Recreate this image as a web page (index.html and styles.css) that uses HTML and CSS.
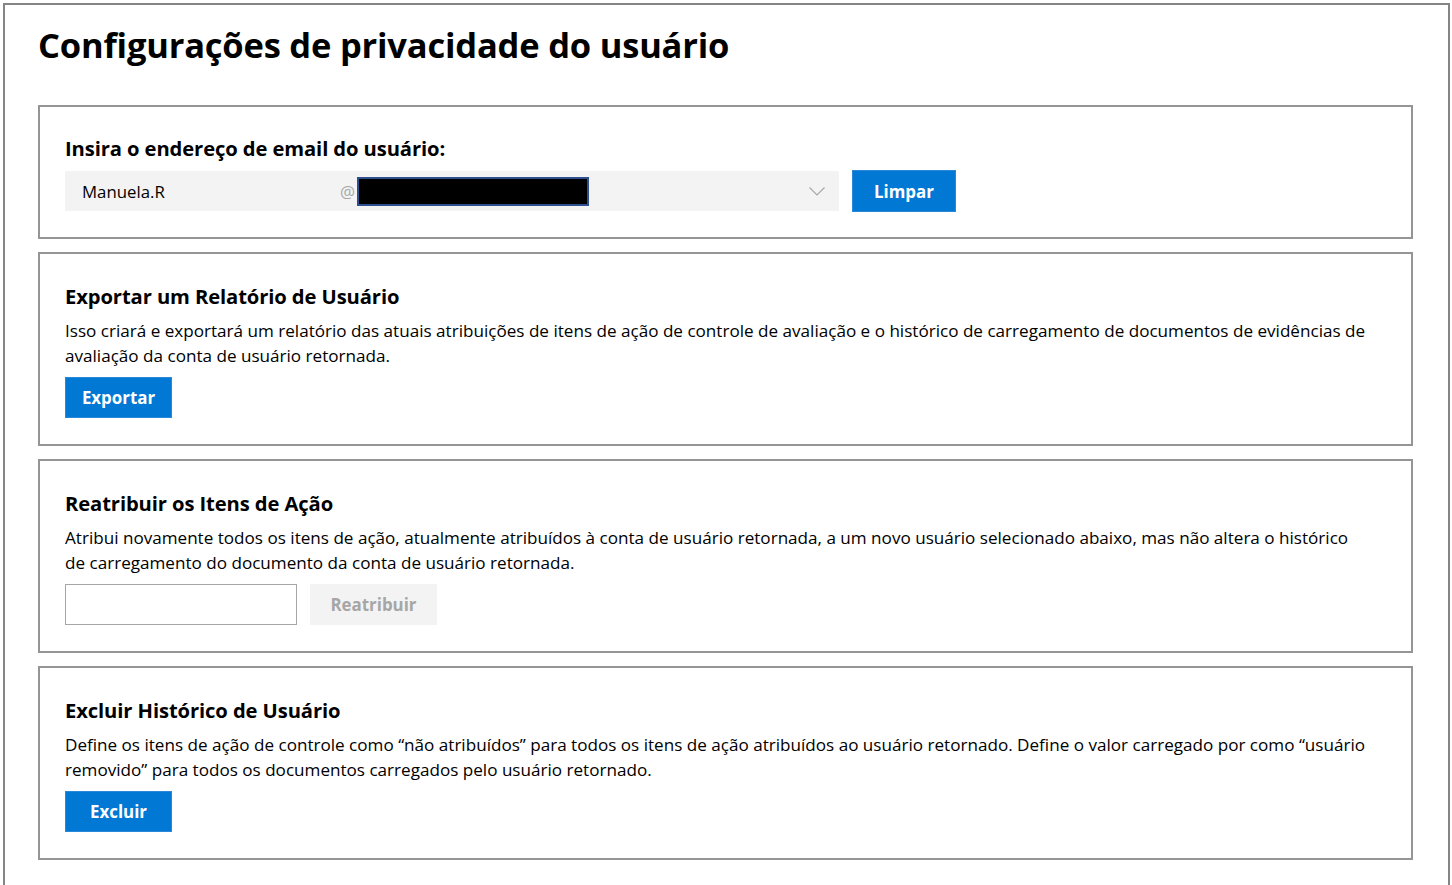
FILE: index.html
```html
<!DOCTYPE html>
<html lang="pt-BR">
<head>
<meta charset="utf-8">
<title>Configurações de privacidade do usuário</title>
<link rel="stylesheet" href="styles.css">
</head>
<body>
<div class="frame">
  <h1 class="title">Configurações de privacidade do usuário</h1>

  <section class="card card-email">
    <h2 class="card-title">Insira o endereço de email do usuário:</h2>
    <div class="email-row">
      <div class="email-field">
        <span class="email-user">Manuela.R</span>
        <span class="email-at">@</span>
        <span class="email-domain"></span>
        <svg class="chevron" width="16" height="9" viewBox="0 0 16 9"><path d="M0.5 0.5 L8 8 L15.5 0.5" fill="none" stroke="#a8a8a8" stroke-width="1.2"/></svg>
      </div>
      <button class="btn btn-primary btn-limpar">Limpar</button>
    </div>
  </section>

  <section class="card">
    <h2 class="card-title">Exportar um Relatório de Usuário</h2>
    <p class="card-text">Isso criará e exportará um relatório das atuais atribuições de itens de ação de controle de avaliação e o histórico de carregamento de documentos de evidências de avaliação da conta de usuário retornada.</p>
    <button class="btn btn-primary btn-wide">Exportar</button>
  </section>

  <section class="card">
    <h2 class="card-title">Reatribuir os Itens de Ação</h2>
    <p class="card-text">Atribui novamente todos os itens de ação, atualmente atribuídos à conta de usuário retornada, a um novo usuário selecionado abaixo, mas não altera o histórico de carregamento do documento da conta de usuário retornada.</p>
    <div class="reassign-row">
      <input class="text-input" type="text">
      <button class="btn btn-disabled" disabled>Reatribuir</button>
    </div>
  </section>

  <section class="card">
    <h2 class="card-title">Excluir Histórico de Usuário</h2>
    <p class="card-text">Define os itens de ação de controle como “não atribuídos” para todos os itens de ação atribuídos ao usuário retornado. Define o valor carregado por como “usuário removido” para todos os documentos carregados pelo usuário retornado.</p>
    <button class="btn btn-primary btn-wide">Excluir</button>
  </section>
</div>
</body>
</html>
```

FILE: styles.css
```css
* { box-sizing: border-box; }

html, body {
  margin: 0;
  padding: 0;
  background: #ffffff;
  overflow: hidden;
}

body {
  font-family: "Open Sans", "Noto Sans", sans-serif;
  color: #000;
}

.frame {
  margin: 3px 2px 0 3px;
  border: 2px solid #858585;
  border-bottom: none;
  min-height: 900px;
  padding: 19px 35px 0 33px;
}

.title {
  margin: 0 0 39px 0;
  font-size: 34.5px;
  line-height: 42px;
  font-weight: 700;
  letter-spacing: -0.2px;
}

.card {
  border: 2px solid #959595;
  padding: 28px 44px 26px 25px;
  margin-bottom: 13px;
}

.card-email {
  padding-top: 27px;
  padding-bottom: 25px;
}

.card-title {
  margin: 0 0 8px 0;
  font-size: 20.2px;
  line-height: 28px;
  font-weight: 700;
  letter-spacing: -0.1px;
}

.card-text {
  margin: 0 0 9px 0;
  font-size: 17.1px;
  line-height: 25px;
  font-weight: 400;
}

.email-row {
  display: flex;
  align-items: center;
  gap: 13px;
}

.email-field {
  width: 774px;
  height: 40px;
  background: #f3f3f3;
  display: flex;
  align-items: center;
  padding: 0 14px 0 17px;
  font-size: 16.8px;
}

.email-user {
  width: 258px;
}

.email-at {
  color: #a8a8a8;
  width: 17px;
}

.email-domain {
  width: 232px;
  height: 29px;
  background: #000;
  border: 2px solid #2d4f8e;
}

.chevron {
  margin-left: auto;
}

.btn {
  font-family: "Open Sans", "Noto Sans", sans-serif;
  font-size: 16.9px;
  font-weight: 700;
  height: 41px;
  border: none;
  padding: 0;
}

.btn-primary {
  background: #0078d4;
  color: #fff;
  border: 1px solid #2b88d8;
}

.btn-limpar {
  width: 104px;
  height: 42px;
}

.btn-wide {
  width: 107px;
  display: block;
}

.reassign-row {
  display: flex;
  gap: 13px;
}

.text-input {
  width: 232px;
  height: 41px;
  border: 1px solid #a6a6a6;
  margin: 0;
  padding: 0 8px;
  background: #fff;
}

.btn-disabled {
  width: 127px;
  background: #f3f3f3;
  color: #a6a6a6;
}
```
